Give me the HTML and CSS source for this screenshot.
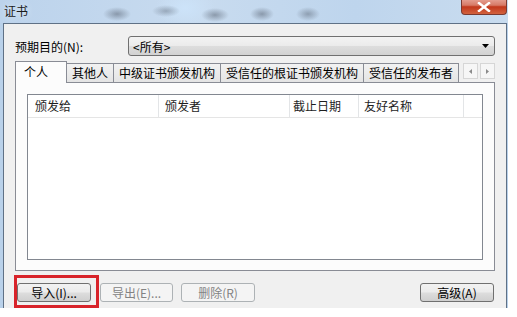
FILE: index.html
```html
<!DOCTYPE html>
<html lang="zh-CN">
<head>
    <meta charset="UTF-8">
    <title>证书</title>
    <link rel="stylesheet" href="styles.css">
</head>
<body>

    <div class="window">
        <!-- Aero title bar -->
        <div class="titlebar">
            <span class="title">证书</span>
            <div class="close">
                <svg width="14" height="10" viewBox="0 0 14 10">
                    <path d="M2 1 L12 9 M12 1 L2 9" stroke="#fff" stroke-width="2.4" stroke-linecap="square"/>
                </svg>
            </div>
        </div>

        <div class="client">
            <div class="purpose">
                <span class="purpose-label">预期目的(N):</span>
                <div class="combo">
                    <span>&lt;所有&gt;</span>
                    <svg class="combo-arrow" width="7" height="4" viewBox="0 0 7 4"><path d="M0 0 H7 L3.5 4 Z" fill="#000"/></svg>
                </div>
            </div>

            <div class="tab-row">
                <div class="tab-strip">
                    <div class="tab active">个人</div>
                    <div class="tab">其他人</div>
                    <div class="tab">中级证书颁发机构</div>
                    <div class="tab">受信任的根证书颁发机构</div>
                    <div class="tab">受信任的发布者</div>
                </div>
                <div class="tab-scroll">
                    <span class="scroll-btn"><svg width="3" height="5" viewBox="0 0 3 5"><path d="M3 0 V5 L0 2.5 Z" fill="#8a8a8a"/></svg></span>
                    <span class="scroll-btn"><svg width="3" height="5" viewBox="0 0 3 5"><path d="M0 0 V5 L3 2.5 Z" fill="#8a8a8a"/></svg></span>
                </div>
            </div>

            <div class="panel">
                <div class="list">
                    <div class="list-header">
                        <div class="col col-to">颁发给</div>
                        <div class="col col-by">颁发者</div>
                        <div class="col col-date">截止日期</div>
                        <div class="col col-name">友好名称</div>
                        <div class="col col-rest"></div>
                    </div>
                </div>
            </div>

            <div class="buttons">
                <div class="marked">
                    <button class="btn">导入(I)...</button>
                    <span class="mark"></span>
                </div>
                <button class="btn btn-export" disabled>导出(E)...</button>
                <button class="btn" disabled>删除(R)</button>
                <span class="spacer"></span>
                <button class="btn">高级(A)</button>
            </div>
        </div>
    </div>

</body>
</html>
```

FILE: styles.css
```css
/* Page */
body {
    margin: 0;
    background: #ffffff;
    font-family: "Noto Sans CJK SC", "Liberation Sans", sans-serif;
    font-size: 12px;
    color: #000;
}

/* Window frame */
.window {
    width: 508px;
    height: 308px;
    display: flex;
    flex-direction: column;
    background: #b9d1ea;
}

.titlebar {
    height: 23px;
    flex-shrink: 0;
    display: flex;
    align-items: flex-start;
    position: relative;
    background:
        radial-gradient(ellipse 14px 7px at 117px 14px, rgba(80, 90, 105, 0.5), transparent),
        radial-gradient(ellipse 14px 6px at 166px 11px, rgba(80, 90, 105, 0.4), transparent),
        radial-gradient(ellipse 14px 7px at 215px 15px, rgba(80, 90, 105, 0.5), transparent),
        radial-gradient(ellipse 12px 7px at 262px 14px, rgba(80, 90, 105, 0.5), transparent),
        radial-gradient(ellipse 12px 7px at 308px 14px, rgba(80, 90, 105, 0.45), transparent),
        radial-gradient(ellipse 30px 20px at 185px 8px, rgba(205, 228, 250, 0.9), transparent),
        linear-gradient(90deg, #bcd3ec 0%, #c8dbef 40%, #bed5ed 70%, #c9dcef 100%);
}

.title {
    margin: 2px 0 0 4px;
    line-height: 17px;
    font-size: 12px;
    color: #1a1a1a;
    text-shadow: 0 0 6px #e8f1fb;
}

.close {
    position: absolute;
    top: -2px;
    right: 1px;
    width: 46px;
    height: 17px;
    box-sizing: border-box;
    border: 1px solid #7a3a30;
    border-top: none;
    border-radius: 0 0 4px 4px;
    background: linear-gradient(#e8a99c 0%, #d77a66 45%, #c2381c 55%, #d2623e 100%);
    display: flex;
    justify-content: center;
    align-items: center;
    padding-top: 2px;
}

/* Client area */
.client {
    flex: 1;
    margin-left: 3px;
    margin-right: 1px;
    border: 1px solid #5f7186;
    border-bottom: none;
    background: #f0f0f0;
    display: flex;
    flex-direction: column;
}

.purpose {
    display: flex;
    align-items: center;
    margin: 12px 11px 0 11px;
}

.purpose-label {
    width: 113px;
}

.combo {
    flex: 1;
    height: 20px;
    box-sizing: border-box;
    border: 1px solid #707070;
    border-radius: 3px;
    background: linear-gradient(#f3f3f3 0%, #ebebeb 48%, #dddddd 52%, #d2d2d2 100%);
    display: flex;
    align-items: center;
    justify-content: space-between;
    padding: 0 5px 0 4px;
}

/* Tabs */
.tab-row {
    display: flex;
    align-items: flex-end;
    margin: 5px 11px 0 11px;
    height: 21px;
    position: relative;
    z-index: 1;
}

.tab-strip {
    flex: 1;
    display: flex;
    align-items: flex-end;
    overflow: hidden;
    height: 22px;
    margin-bottom: -1px;
    padding-left: 2px;
}

.tab {
    flex-shrink: 0;
    height: 19px;
    box-sizing: border-box;
    padding: 0 5px;
    line-height: 18px;
    border: 1px solid #898c95;
    border-bottom: none;
    margin-right: -1px;
    background: linear-gradient(#f2f2f2, #e4e4e4);
    margin-bottom: 1px;
}

.tab.active {
    height: 22px;
    min-width: 52px;
    padding: 0 8px;
    line-height: 20px;
    margin: 0 -1px 0 -2px;
    background: #fcfcfc;
    border-color: #898c95;
    position: relative;
    z-index: 2;
}

.tab-scroll {
    display: flex;
    gap: 2px;
    margin: 0 0 3px 4px;
}

.scroll-btn {
    width: 15px;
    height: 16px;
    box-sizing: border-box;
    border: 1px solid #d6d6d6;
    background: #f6f6f6;
    display: flex;
    justify-content: center;
    align-items: center;
}

.panel {
    height: 189px;
    margin: 0 11px;
    box-sizing: border-box;
    border: 1px solid #898c95;
    background: #fcfcfc;
    padding: 11px;
}

/* List view */
.list {
    height: 166px;
    box-sizing: border-box;
    border: 1px solid #828790;
    background: #ffffff;
}

.list-header {
    display: flex;
    height: 22px;
    border-bottom: 1px solid #e5e5e5;
}

.col {
    box-sizing: border-box;
    border-right: 1px solid #e3e5e7;
    line-height: 22px;
    color: #1e1e1e;
}

.col-to {
    width: 131px;
    padding-left: 7px;
}

.col-by {
    width: 131px;
    padding-left: 6px;
}

.col-date {
    width: 69px;
    padding-left: 3px;
}

.col-name {
    width: 105px;
    padding-left: 5px;
}

.col-rest {
    flex: 1;
    border-right: none;
}

/* Bottom buttons */
.buttons {
    display: flex;
    align-items: center;
    margin: 12px 12px 0 13px;
}

.btn {
    width: 74px;
    height: 19px;
    box-sizing: border-box;
    padding: 0;
    border: 1px solid #707070;
    border-radius: 3px;
    background: linear-gradient(#f2f2f2 0%, #ebebeb 48%, #dddddd 52%, #cfcfcf 100%);
    font-family: inherit;
    font-size: 12px;
    line-height: 17px;
    color: #000;
    margin-right: 9px;
}

.btn:disabled {
    border-color: #adb2b5;
    background: #f4f4f4;
    color: #838383;
}

.btn-export {
    width: 73px;
    margin-right: 8px;
}

.buttons .btn:last-child {
    margin-right: 0;
}

.spacer {
    flex: 1;
}

.marked {
    position: relative;
    display: flex;
}

/* red annotation box around the import button */
.mark {
    position: absolute;
    left: -3px;
    top: -8px;
    width: 85px;
    height: 33px;
    box-sizing: border-box;
    border: 3px solid #d8232a;
}
```
